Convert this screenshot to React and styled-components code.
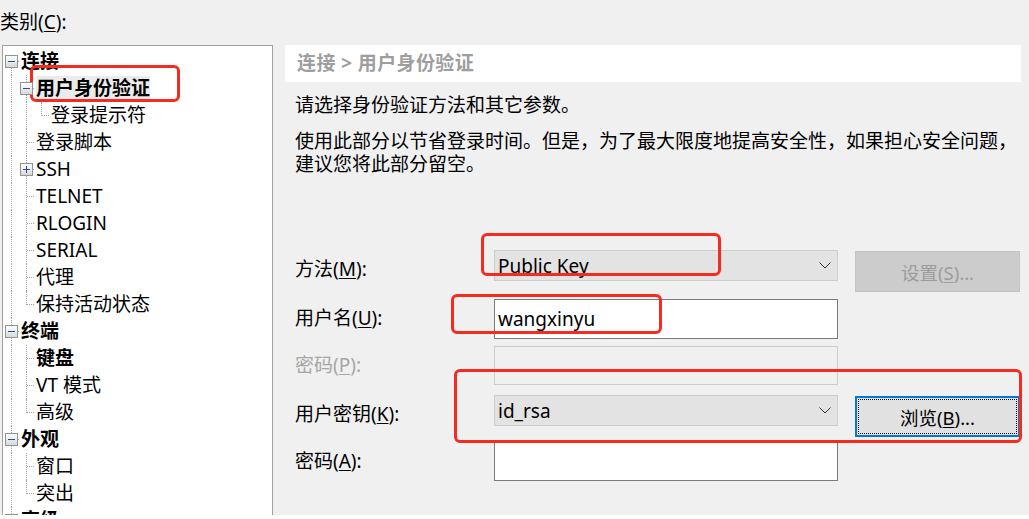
import React from 'react'
import styled, { createGlobalStyle, css } from 'styled-components'

const GlobalStyle = createGlobalStyle`
  html, body {
    margin: 0;
    padding: 0;
    background: #ffffff;
  }
  body {
    font-family: "Noto Sans", "Noto Sans CJK SC", sans-serif;
    font-size: 19px;
    color: #000;
    overflow: hidden;
  }
`;

const Dialog = styled.div`
  position: relative;
  width: 1029px;
  height: 515px;
  background: #f0f0f0;
  display: grid;
  grid-template-columns: 285px 1fr;
  grid-template-rows: 45px 1fr;
  overflow: hidden;
`;

const CategoryLabel = styled.div`
  padding-top: 10px;
  line-height: 24px;
  u { text-underline-offset: 2px; }
`;

const TreePanel = styled.div`
  grid-row: 2;
  grid-column: 1;
  margin-left: 2px;
  width: 268px;
  background: #fff;
  border: 1px solid #a0a0a0;
  border-bottom: none;
  padding: 2px 0 0 1px;
  overflow: hidden;
`;

const TreeRow = styled.div`
  display: flex;
  align-items: center;
  height: 27px;
`;

const dotted = '1px dotted #a0a0a0';

const Cell = styled.div`
  position: relative;
  flex: 0 0 15px;
  height: 27px;

  &::before {
    content: '';
    position: absolute;
    left: 7px;
    border-left: ${dotted};
    ${p => p.$kind === 'none' && css`display: none;`}
    ${p => (p.$kind === 'line' || p.$kind === 'tee') && css`top: 0; bottom: 0;`}
    ${p => p.$kind === 'ell' && css`top: 0; height: 14px;`}
    ${p => p.$kind === 'first' && css`top: 13px; bottom: 0;`}
  }

  &::after {
    content: '';
    position: absolute;
    left: 8px;
    top: 13px;
    width: 7px;
    border-top: ${dotted};
    ${p => p.$kind === 'line' && css`display: none;`}
  }
`;

const Expander = styled.span`
  position: absolute;
  z-index: 1;
  left: 1px;
  top: 7px;
  width: 11px;
  height: 11px;
  border: 1px solid #939393;
  background: linear-gradient(#ffffff, #d8d8d8);

  &::before {
    content: '';
    position: absolute;
    left: 2px;
    top: 5px;
    width: 7px;
    height: 1px;
    background: #2c4d9e;
  }

  &::after {
    content: '';
    position: absolute;
    left: 5px;
    top: 2px;
    width: 1px;
    height: 7px;
    background: #2c4d9e;
    display: ${p => (p.$open ? 'none' : 'block')};
  }
`;

const NodeLabel = styled.span`
  margin-left: 2px;
  line-height: 25px;
  white-space: nowrap;
  font-weight: ${p => (p.$bold ? 700 : 400)};
  background: ${p => (p.$selected ? '#ebebeb' : 'transparent')};
`;

const RightPanel = styled.div`
  grid-row: 2;
  grid-column: 2;
  margin-right: 8px;
  display: flex;
  flex-direction: column;
`;

const PageHeader = styled.div`
  height: 37px;
  line-height: 37px;
  padding-left: 12px;
  background: #fff;
  color: #9e9e9e;
  font-weight: 700;
  letter-spacing: 0.4px;
`;

const Description = styled.p`
  margin: ${p => p.$top}px 0 0;
  padding-left: 10px;
  line-height: 23px;
  white-space: nowrap;
`;

const Form = styled.div`
  margin-top: 74px;
  display: flex;
  flex-direction: column;
`;

const FormRow = styled.div`
  display: grid;
  grid-template-columns: 182px 344px 165px;
  column-gap: 17px;
  align-items: start;
  padding-left: 10px;
  height: ${p => p.$height}px;
`;

const Label = styled.label`
  line-height: 38px;
  white-space: nowrap;
  color: ${p => (p.$disabled ? '#a6a6a6' : '#000')};
  u { text-underline-offset: 2px; }
`;

const Combo = styled.div`
  box-sizing: border-box;
  height: 31px;
  display: flex;
  align-items: center;
  justify-content: space-between;
  padding: 0 6px 0 3px;
  background: #e3e3e3;
  border: 1px solid #cccccc;
`;

const Field = styled.input`
  box-sizing: border-box;
  width: 344px;
  height: ${p => p.$height}px;
  margin: 0;
  padding: 0 3px;
  font: inherit;
  color: #000;
  outline: none;
  background: ${p => (p.disabled ? '#f0f0f0' : '#fff')};
  border: 1px solid ${p => (p.disabled ? '#cccccc' : '#7a7a7a')};
`;

const Button = styled.button`
  position: relative;
  box-sizing: border-box;
  height: 41px;
  margin: 1px 0 0;
  padding: 0;
  font: inherit;
  font-size: 18.5px;
  color: ${p => (p.disabled ? '#9c9c9c' : '#000')};
  background: ${p => (p.disabled ? '#cccccc' : '#e1e1e1')};
  border: 1px solid ${p => (p.disabled ? '#c4c4c4' : '#0078d7')};
  u { text-underline-offset: 2px; }

  ${p => p.$focused && css`
    box-shadow: inset 0 0 0 1px #0078d7;
    &::after {
      content: '';
      position: absolute;
      inset: 2px;
      border: 1px dotted #000;
    }
  `}
`;

const Annotation = styled.div`
  position: absolute;
  left: ${p => p.$x}px;
  top: ${p => p.$y}px;
  width: ${p => p.$w}px;
  height: ${p => p.$h}px;
  box-sizing: border-box;
  border: 3px solid #f72a20;
  border-radius: 6px;
  pointer-events: none;
`;

const Chevron = () => (
  <svg width="12" height="7" viewBox="0 0 12 7">
    <polyline points="0.5,0.5 6,6 11.5,0.5" fill="none" stroke="#333" strokeWidth="1" />
  </svg>
);

const tree = [
  { label: '连接', bold: true, cells: ['first'], box: 'open' },
  { label: '用户身份验证', bold: true, selected: true, cells: ['line', 'tee'], box: 'open' },
  { label: '登录提示符', cells: ['line', 'line', 'ell'] },
  { label: '登录脚本', cells: ['line', 'tee'] },
  { label: 'SSH', cells: ['line', 'tee'], box: 'closed' },
  { label: 'TELNET', cells: ['line', 'tee'] },
  { label: 'RLOGIN', cells: ['line', 'tee'] },
  { label: 'SERIAL', cells: ['line', 'tee'] },
  { label: '代理', cells: ['line', 'tee'] },
  { label: '保持活动状态', cells: ['line', 'ell'] },
  { label: '终端', bold: true, cells: ['tee'], box: 'open' },
  { label: '键盘', bold: true, cells: ['line', 'tee'] },
  { label: 'VT 模式', cells: ['line', 'tee'] },
  { label: '高级', cells: ['line', 'ell'] },
  { label: '外观', bold: true, cells: ['tee'], box: 'open' },
  { label: '窗口', cells: ['line', 'tee'] },
  { label: '突出', cells: ['line', 'ell'] },
  { label: '高级', bold: true, cells: ['tee'], box: 'closed' },
];

export default function App() {
  return (
    <>
      <GlobalStyle />
      <Dialog>
        <CategoryLabel>类别(<u>C</u>):</CategoryLabel>
        <div />

        <TreePanel>
          {tree.map((node, i) => (
            <TreeRow key={i}>
              {node.cells.map((kind, j) => (
                <Cell key={j} $kind={kind}>
                  {node.box && j === node.cells.length - 1 && (
                    <Expander $open={node.box === 'open'} />
                  )}
                </Cell>
              ))}
              <NodeLabel $bold={node.bold} $selected={node.selected}>
                {node.label}
              </NodeLabel>
            </TreeRow>
          ))}
        </TreePanel>

        <RightPanel>
          <PageHeader>连接 &gt; 用户身份验证</PageHeader>
          <Description $top={12}>请选择身份验证方法和其它参数。</Description>
          <Description $top={13}>
            使用此部分以节省登录时间。但是，为了最大限度地提高安全性，如果担心安全问题，
            <br />
            建议您将此部分留空。
          </Description>

          <Form>
            <FormRow $height={49}>
              <Label>方法(<u>M</u>):</Label>
              <Combo>
                <span>Public Key</span>
                <Chevron />
              </Combo>
              <Button disabled>设置(<u>S</u>)...</Button>
            </FormRow>

            <FormRow $height={47}>
              <Label>用户名(<u>U</u>):</Label>
              <Field $height={40} value="wangxinyu" readOnly />
            </FormRow>

            <FormRow $height={49}>
              <Label $disabled>密码(<u>P</u>):</Label>
              <Field $height={39} type="password" value="" disabled readOnly />
            </FormRow>

            <FormRow $height={47}>
              <Label>用户密钥(<u>K</u>):</Label>
              <Combo>
                <span>id_rsa</span>
                <Chevron />
              </Combo>
              <Button $focused>浏览(<u>B</u>)...</Button>
            </FormRow>

            <FormRow $height={40}>
              <Label>密码(<u>A</u>):</Label>
              <Field $height={39} type="password" value="" readOnly />
            </FormRow>
          </Form>
        </RightPanel>

        <Annotation $x={30} $y={65} $w={150} $h={37} />
        <Annotation $x={481} $y={233} $w={240} $h={43} />
        <Annotation $x={451} $y={294} $w={211} $h={40} />
        <Annotation $x={454} $y={369} $w={568} $h={74} />
      </Dialog>
    </>
  );
}
